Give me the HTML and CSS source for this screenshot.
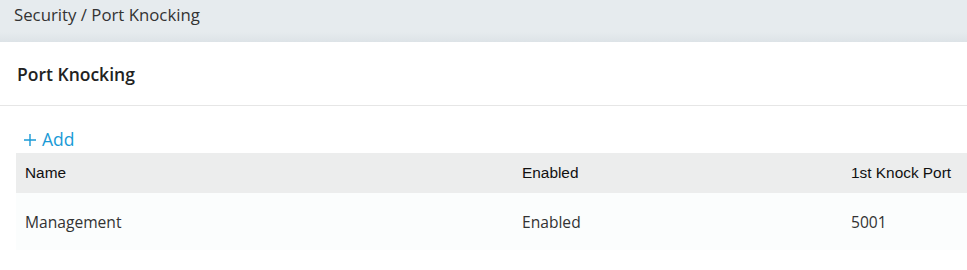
FILE: index.html
```html
<!DOCTYPE html>
<html>
<head>
    <meta charset="UTF-8">
    <title>Port Knocking</title>
    <link rel="stylesheet" href="styles.css">
</head>
<body>
    <div class="breadcrumb">Security / Port Knocking</div>

    <div class="panel">
        <div class="panel-header">
            <h1 class="panel-title">Port Knocking</h1>
        </div>

        <div class="panel-body">
            <a class="add-link" href="#">
                <svg class="add-icon" viewBox="0 0 12 12" fill="none" stroke="currentColor" stroke-width="1.4">
                    <path d="M6 0v12M0 6h12"></path>
                </svg>
                Add
            </a>
            <table class="grid">
                <thead>
                    <tr>
                        <th class="col-name">Name</th>
                        <th class="col-enabled">Enabled</th>
                        <th class="col-port">1st Knock Port</th>
                    </tr>
                </thead>
                <tbody>
                    <tr>
                        <td>Management</td>
                        <td>Enabled</td>
                        <td>5001</td>
                    </tr>
                </tbody>
            </table>
        </div>
    </div>
</body>
</html>
```

FILE: styles.css
```css
body {
    margin: 0;
    background-color: #fff;
    font-family: "Open Sans", "Liberation Sans", Arial, sans-serif;
    color: #333;
}

.breadcrumb {
    height: 42px;
    box-sizing: border-box;
    padding: 3px 14px 0;
    font-size: 16.8px;
    line-height: 24px;
    color: #333;
    background: linear-gradient(to bottom, #e6ebee 0, #e6ebee 32px, #dde3e7 42px);
}

.panel-header {
    height: 63px;
    display: flex;
    align-items: center;
    padding: 0 17px;
    border-bottom: 1px solid #e6e6e6;
}

.panel-title {
    margin: 0;
    padding-top: 1px;
    font-size: 17.5px;
    font-weight: 600;
    color: #222;
}

.panel-body {
    padding: 20px 0 0 16px;
}

.add-link {
    display: inline-flex;
    align-items: center;
    gap: 6px;
    padding-left: 8px;
    font-size: 17.5px;
    line-height: 27px;
    color: #1a9ad6;
    text-decoration: none;
}

.add-icon {
    width: 12px;
    height: 12px;
    margin-top: 1px;
}

.grid {
    width: 100%;
    border-collapse: collapse;
    font-family: "Liberation Sans", Arial, sans-serif;
    font-size: 15.4px;
}

.grid th {
    height: 40px;
    padding: 0 9px;
    text-align: left;
    font-weight: 400;
    color: #111;
    background-color: #eceded;
}

.grid td {
    height: 57px;
    padding: 0 9px;
    font-family: "Open Sans", "Liberation Sans", Arial, sans-serif;
    font-size: 15.6px;
    color: #333;
    background-color: #fbfdfd;
}

.col-name {
    width: 479px;
}

.col-enabled {
    width: 311px;
}
```
